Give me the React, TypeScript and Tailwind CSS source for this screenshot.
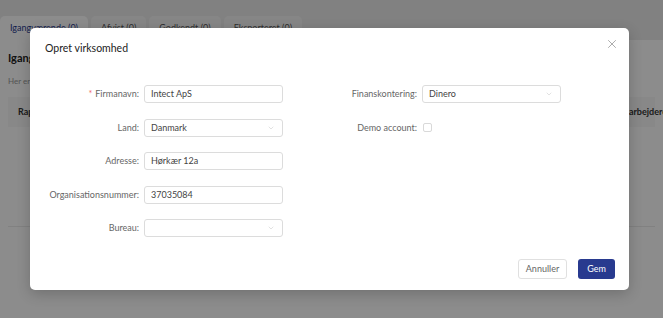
import { X, ChevronDown } from "lucide-react";

const tabs = ["Igangværende (0)", "Afvist (0)", "Godkendt (0)", "Eksporteret (0)"];

const Label = ({ text, required }: { text: string; required?: boolean }) => (
  <div className="w-[94px] shrink-0 whitespace-nowrap text-right text-[9px] text-[#666]">
    {required && <span className="mr-[3px] text-[#f06a6a]">*</span>}
    {text}:
  </div>
);

const Input = ({ value }: { value: string }) => (
  <div className="ml-[5px] flex h-[18px] w-[139px] items-center rounded-[3px] border border-[#dcdcdc] px-[6px] text-[9px] text-[#444]">
    {value}
  </div>
);

const Select = ({ value }: { value: string }) => (
  <div className="ml-[5px] flex h-[18px] w-[139px] items-center justify-between rounded-[3px] border border-[#dcdcdc] pl-[6px] pr-[7px] text-[9px] text-[#444]">
    <span>{value}</span>
    <ChevronDown size={8} strokeWidth={1.5} className="text-[#c4c4c4]" />
  </div>
);

const Row = ({ children }: { children: React.ReactNode }) => (
  <div className="flex h-[18px] items-center">{children}</div>
);

export default function App() {
  return (
    <div className="relative h-[318px] w-[663px] overflow-hidden bg-white font-['Lato',sans-serif]">
      <div className="flex h-[40px] items-end gap-[3px] bg-[#ececec]">
        {tabs.map((t, i) => (
          <div
            key={t}
            className={`flex h-[24px] items-center rounded-t-[5px] px-[10px] text-[9px] ${
              i === 0 ? "bg-white text-[#1f3a8f]" : "bg-[#f5f5f5] text-[#555]"
            }`}
          >
            {t}
          </div>
        ))}
      </div>
      <div className="px-[8px]">
        <h2 className="pt-[10px] text-[11px] font-bold text-[#222]">Igangværende</h2>
        <p className="mt-[8px] text-[8px] text-[#999]">Her er de igangværende rapporter</p>
        <div className="mt-[10px] flex h-[30px] items-center justify-between bg-[#f7f7f7] pl-[10px] text-[9px] font-bold text-[#333]">
          <span>Rapport</span>
          <span className="-mr-[12px]">Medarbejdere</span>
        </div>
        <div className="h-[100px] border-b border-[#ececec]" />
      </div>

      <div className="absolute inset-0 bg-black/45">
        <div className="relative ml-[30px] mt-[28px] flex h-[262px] w-[599px] flex-col rounded-[5px] bg-white shadow-[0_4px_14px_rgba(0,0,0,0.2)]">
          <button className="absolute right-[10px] top-[9px] text-[#999]">
            <X size={14} strokeWidth={1.4} />
          </button>
          <div className="h-[57px] px-[15px] pt-[13px] text-[10.5px] text-[#222]">
            Opret virksomhed
          </div>
          <div className="grid grid-cols-[278px_278px] pl-[15px]">
            <div className="flex flex-col gap-y-[15.5px]">
              <Row>
                <Label text="Firmanavn" required />
                <Input value="Intect ApS" />
              </Row>
              <Row>
                <Label text="Land" />
                <Select value="Danmark" />
              </Row>
              <Row>
                <Label text="Adresse" />
                <Input value="Hørkær 12a" />
              </Row>
              <Row>
                <Label text="Organisationsnummer" />
                <Input value="37035084" />
              </Row>
              <Row>
                <Label text="Bureau" />
                <Select value="" />
              </Row>
            </div>
            <div className="flex flex-col gap-y-[15.5px]">
              <Row>
                <Label text="Finanskontering" />
                <Select value="Dinero" />
              </Row>
              <Row>
                <Label text="Demo account" />
                <div className="ml-[6px] h-[9px] w-[9px] rounded-[2px] border border-[#d9d9d9] bg-white" />
              </Row>
            </div>
          </div>
          <div className="mt-auto flex justify-end gap-[11px] pb-[11px] pr-[14px]">
            <button className="h-[20px] w-[49px] rounded-[3px] border border-[#e0e0e0] bg-white text-[9px] text-[#666]">
              Annuller
            </button>
            <button className="h-[20px] w-[37px] rounded-[3px] bg-[#283a8f] text-[9px] text-white">
              Gem
            </button>
          </div>
        </div>
      </div>
    </div>
  );
}
